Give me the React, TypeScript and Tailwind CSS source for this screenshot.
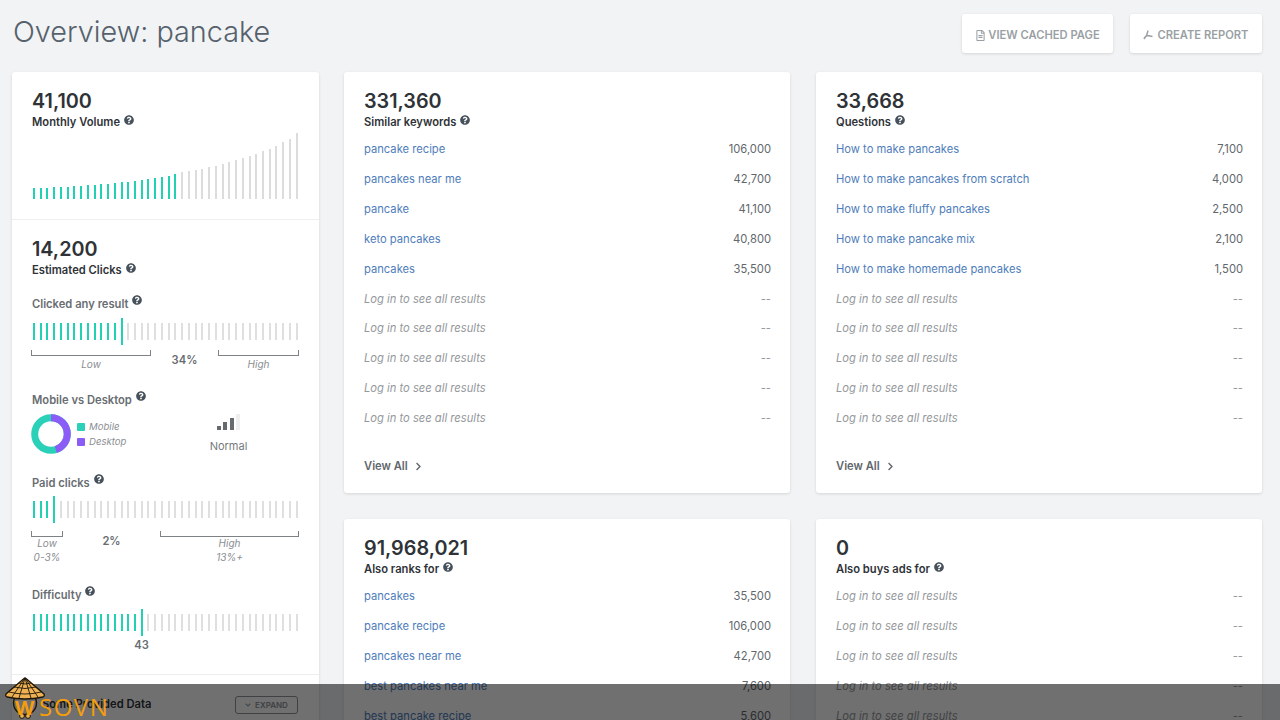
import { FaQuestionCircle, FaRegFileAlt, FaChevronRight, FaChevronDown } from "react-icons/fa"

const similar = [
	["pancake recipe", "106,000"],
	["pancakes near me", "42,700"],
	["pancake", "41,100"],
	["keto pancakes", "40,800"],
	["pancakes", "35,500"],
]
const questions = [
	["How to make pancakes", "7,100"],
	["How to make pancakes from scratch", "4,000"],
	["How to make fluffy pancakes", "2,500"],
	["How to make pancake mix", "2,100"],
	["How to make homemade pancakes", "1,500"],
]
const ranks = [
	["pancakes", "35,500"],
	["pancake recipe", "106,000"],
	["pancakes near me", "42,700"],
	["best pancakes near me", "7,600"],
	["best pancake recipe", "5,600"],
]
const volume = [11, 11, 11, 12, 12, 12, 13, 13, 14, 14, 15, 15, 16, 17, 17, 18, 19, 20, 21, 22, 23, 25, 27, 28, 29, 30, 32, 33, 35, 37, 39, 41, 43, 45, 48, 50, 53, 57, 60, 66]

function Help({ raised }: { raised?: boolean }) {
	return (
		<FaQuestionCircle
			className={
				raised
					? "inline-block text-[10px] text-[#47515c] ml-[4px] align-[3px]"
					: "inline-block text-[10px] text-[#47515c] ml-[4px] align-[1px]"
			}
		/>
	)
}

function Stat({ value, label }: { value: string; label: string }) {
	return (
		<div>
			<div className="text-[19.8px] leading-[24px] font-semibold text-[#2f3337]">{value}</div>
			<div className="mt-[1px] text-[11.2px] leading-[17px] font-semibold text-[#2f3337]">
				{label}
				<Help />
			</div>
		</div>
	)
}

function Row({ name, value }: { name: string; value: string }) {
	return (
		<div className="h-[29.9px] flex items-center justify-between text-[11.2px]">
			<span className="text-[#4f7dbb]">{name}</span>
			<span className="text-[#62676c]">{value}</span>
		</div>
	)
}

function LockedRow() {
	return (
		<div className="h-[29.9px] flex items-center justify-between text-[11.2px]">
			<span className="italic text-[#94989c]">Log in to see all results</span>
			<span className="text-[#94989c]">--</span>
		</div>
	)
}

function ListCard({ value, label, rows, locked, viewAll }: { value: string; label: string; rows: string[][]; locked: number; viewAll?: boolean }) {
	return (
		<div className={`bg-white rounded-[3px] shadow-[0_1px_3px_rgba(0,0,0,0.12)] pl-[20px] pr-[19px] pt-[17px] ${viewAll ? "h-[421px]" : "h-[300px]"}`}>
			<Stat value={value} label={label} />
			<div className="mt-[3.5px]">
				{rows.map((r) => (
					<Row key={r[0]} name={r[0]} value={r[1]} />
				))}
				{Array.from({ length: locked }).map((_, i) => (
					<LockedRow key={i} />
				))}
			</div>
			{viewAll && (
				<div className="mt-[25px] flex items-center gap-[6px] text-[11.2px] font-semibold text-[#62676c]">
					View All
					<FaChevronRight className="text-[9px]" />
				</div>
			)}
		</div>
	)
}

function Gauge({ mark }: { mark: number }) {
	return (
		<div className="h-[27px] ml-[1px] w-[265px] flex items-center justify-between">
			{Array.from({ length: 40 }).map((_, i) => (
				<div
					key={i}
					className={
						i === mark
							? "w-[2px] h-[27px] bg-[#22d1b4]"
							: i < mark
								? "w-[2px] h-[17px] bg-[#22d1b4]"
								: "w-[2px] h-[17px] bg-[#dfdfdf]"
					}
				/>
			))}
		</div>
	)
}

function Bracket({ className }: { className: string }) {
	return <div className={`h-[6px] border-x border-b border-[#7d8287] ${className}`} />
}

function Heading({ children }: { children: string }) {
	return (
		<div className="text-[11.2px] leading-[16px] font-semibold text-[#686d72]">
			{children}
			<Help raised />
		</div>
	)
}

function SideCard() {
	return (
		<div className="w-[307px] h-[700px] bg-white rounded-[3px] shadow-[0_1px_3px_rgba(0,0,0,0.12)]">
			<div className="h-[148px] pl-[20px] pr-[18px] pt-[17px] border-b border-[#eceef0]">
				<Stat value="41,100" label="Monthly Volume" />
				<div className="h-[66px] mt-[2px] ml-[1px] w-[265px] flex items-end justify-between">
					{volume.map((h, i) => (
						<div
							key={i}
							className={i < 22 ? "w-[2px] bg-[#22d1b4]" : "w-[2px] bg-[#dcdcdc]"}
							style={{ height: h }}
						/>
					))}
				</div>
			</div>

			<div className="h-[455px] pl-[20px] pr-[18px] pt-[17px] border-b border-[#eceef0]">
				<Stat value="14,200" label="Estimated Clicks" />

				<div className="mt-[16px]">
					<Heading>Clicked any result</Heading>
				</div>
				<div className="mt-[5.5px]">
					<Gauge mark={13} />
				</div>
				<div className="mt-[5.5px] flex text-[10px] italic text-[#8a8e92] w-[268px] -ml-[1px]">
					<div className="w-[120px] text-center">
						<Bracket className="w-[120px]" />
						<div className="mt-[1px] leading-[14px]">Low</div>
					</div>
					<div className="w-[67px] pt-[2px] text-center not-italic font-semibold text-[11.2px] text-[#686d72] leading-[16px]">34%</div>
					<div className="w-[81px] text-center">
						<Bracket className="w-[81px]" />
						<div className="mt-[1px] leading-[14px]">High</div>
					</div>
				</div>

				<div className="mt-[20px]">
					<Heading>Mobile vs Desktop</Heading>
				</div>
				<div className="mt-[5px] h-[42px] flex items-center -ml-[1px]">
					<svg width="40" height="40" viewBox="0 0 40 40">
						<circle cx="20" cy="20" r="16.3" fill="none" stroke="#2ad0b8" strokeWidth="7" />
						<circle cx="20" cy="20" r="16.3" fill="none" stroke="#8b5cf6" strokeWidth="7" strokeDasharray="46 102.4" transform="rotate(-90 20 20)" />
					</svg>
					<div className="ml-[6px] text-[9.6px] italic text-[#8a8e92] leading-[15px]">
						<div className="flex items-center gap-[4px]">
							<span className="w-[8px] h-[8px] rounded-[1px] bg-[#2ad0b8]" />
							Mobile
						</div>
						<div className="flex items-center gap-[4px]">
							<span className="w-[8px] h-[8px] rounded-[1px] bg-[#8b5cf6]" />
							Desktop
						</div>
					</div>
					<div className="ml-[72px] mb-[2px] w-[60px] flex flex-col items-center">
						<div className="h-[17px] flex items-end gap-[2.4px]">
							<div className="w-[4px] h-[4px] bg-[#666a6e]" />
							<div className="w-[4px] h-[8px] bg-[#666a6e]" />
							<div className="w-[4px] h-[12px] bg-[#666a6e]" />
							<div className="w-[4px] h-[16px] bg-[#eeeeee]" />
						</div>
						<div className="text-[11px] leading-[14px] mt-[9px] text-[#75797d]">Normal</div>
					</div>
				</div>

				<div className="mt-[19px]">
					<Heading>Paid clicks</Heading>
				</div>
				<div className="mt-[4.5px]">
					<Gauge mark={3} />
				</div>
				<div className="mt-[8.5px] flex text-[10px] italic text-[#8a8e92] w-[268px] -ml-[1px]">
					<div className="w-[32px] text-center">
						<Bracket className="w-[32px]" />
						<div className="-mt-[1px] leading-[14px]">Low</div>
						<div className="leading-[14px] whitespace-nowrap">0-3%</div>
					</div>
					<div className="w-[97px] pt-[1.5px] text-center not-italic font-semibold text-[11.2px] text-[#686d72] leading-[16px]">2%</div>
					<div className="w-[139px] text-center">
						<Bracket className="w-[139px]" />
						<div className="-mt-[1px] leading-[14px]">High</div>
						<div className="leading-[14px]">13%+</div>
					</div>
				</div>

				<div className="mt-[21.5px]">
					<Heading>Difficulty</Heading>
				</div>
				<div className="mt-[6px]">
					<Gauge mark={16} />
				</div>
				<div className="w-[219px] text-center font-semibold text-[11.2px] text-[#686d72] leading-[16px] mt-[1.5px]">43</div>
			</div>

			<div className="h-[58px] pt-[1px] pl-[30px] pr-[21px] flex items-center justify-between">
				<span className="text-[11.2px] font-semibold text-[#2f3337]">Some Provided Data</span>
				<div className="w-[63px] h-[18px] border border-[#8f9499] rounded-[3px] flex items-center justify-center gap-[4px] text-[8px] font-semibold text-[#8f9499]">
					<FaChevronDown className="text-[6px]" />
					EXPAND
				</div>
			</div>
		</div>
	)
}

function Watermark() {
	return (
		<div className="absolute left-0 right-0 top-[684px] h-[36px] bg-[#000000]/56">
			<svg className="absolute left-[4px] top-[-7px]" width="42" height="43" viewBox="0 0 42 43">
				<circle cx="21" cy="26" r="11.5" fill="none" stroke="#1d1408" strokeWidth="1.4" />
				<path d="M20 1.5 Q21 0.5 22 1.5 L40 17 Q41 19 39 20 Q21 24 3 20 Q1 19 2 17 Z" fill="#eeb254" stroke="#1d1408" strokeWidth="1.3" />
				<path d="M21 1 L15 21 M21 1 L27 21 M21 1 L8 20 M21 1 L34 20 M5 15 Q21 19 37 15 M10 10 Q21 13 32 10 M15 6 Q21 8 27 6" stroke="#1d1408" strokeWidth="0.9" fill="none" />
				<circle cx="18" cy="39" r="2.4" fill="#eeb254" stroke="#1d1408" />
				<circle cx="24" cy="39" r="2.4" fill="#eeb254" stroke="#1d1408" />
			</svg>
			<div className="absolute left-[15px] top-[16px] font-['Open_Sans',sans-serif] text-[20px] leading-[15px] font-bold text-[#f59e0b]">W</div>
			<div className="absolute left-[39px] top-[8px] font-['Open_Sans',sans-serif] text-[24px] leading-[30px] tracking-[1.5px] text-[#f59e0b]">SOVN</div>
		</div>
	)
}

export default function App() {
	return (
		<div className="relative w-[1280px] h-[720px] overflow-hidden bg-[#f1f3f5] font-['Inter',sans-serif]">
			<div className="h-[72px] pl-[13px] pr-[18px] flex items-start justify-between">
				<h1 className="mt-[11.5px] text-[28.8px] leading-[40px] font-light text-[#56616c]">Overview: pancake</h1>
				<div className="mt-[14px] flex gap-[17px]">
					<button className="w-[151px] h-[39px] pt-[3px] bg-white rounded-[3px] shadow-[0_1px_3px_rgba(0,0,0,0.12)] flex items-center justify-center gap-[2px] text-[11.2px] font-semibold text-[#9a9fa4]">
						<FaRegFileAlt className="text-[11px]" />
						VIEW CACHED PAGE
					</button>
					<button className="w-[132px] h-[39px] pt-[3px] bg-white rounded-[3px] shadow-[0_1px_3px_rgba(0,0,0,0.12)] flex items-center justify-center gap-[4px] text-[11.2px] font-semibold text-[#9a9fa4]">
						<svg width="10" height="10" viewBox="0 0 10 10" fill="none" stroke="currentColor" strokeWidth="1.4">
							<path d="M5 0.5 C4.6 3.5 3 7 0.8 9 M4.6 5.5 L9.5 6.5 M4.6 5.5 C3.5 6 2 6.5 1 8.5" />
						</svg>
						CREATE REPORT
					</button>
				</div>
			</div>

			<div className="pl-[12px] flex gap-[25px] items-start">
				<SideCard />
				<div className="grid grid-cols-[446px_446px] gap-x-[26px] gap-y-[26px]">
					<ListCard value="331,360" label="Similar keywords" rows={similar} locked={5} viewAll />
					<ListCard value="33,668" label="Questions" rows={questions} locked={5} viewAll />
					<ListCard value="91,968,021" label="Also ranks for" rows={ranks} locked={0} />
					<ListCard value="0" label="Also buys ads for" rows={[]} locked={5} />
				</div>
			</div>

			<Watermark />
		</div>
	)
}
